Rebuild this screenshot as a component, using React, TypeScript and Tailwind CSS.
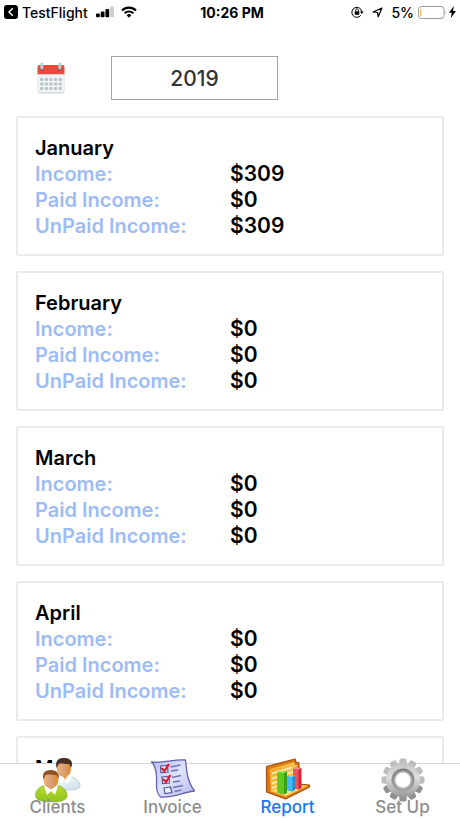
import React from "react";

type Month = { name: string; income: number; paid: number; unpaid: number };

const months: Month[] = [
  { name: "January", income: 309, paid: 0, unpaid: 309 },
  { name: "February", income: 0, paid: 0, unpaid: 0 },
  { name: "March", income: 0, paid: 0, unpaid: 0 },
  { name: "April", income: 0, paid: 0, unpaid: 0 },
  { name: "May", income: 0, paid: 0, unpaid: 0 },
];

function StatusBar() {
  return (
    <header className="grid h-6 shrink-0 grid-cols-[1fr_auto_1fr] items-center pr-1 pl-1 text-[14px] font-medium text-black">
      <div className="flex items-center">
        <svg className="mr-1 h-[14px] w-[14px]" viewBox="0 0 14 14" aria-hidden="true">
          <rect width="14" height="14" rx="3" fill="#000" />
          <path d="M8.8 3.3 5 7l3.8 3.7" fill="none" stroke="#fff" strokeWidth="1.4" />
        </svg>
        <span>TestFlight</span>
        <svg className="ml-2 h-3 w-[19px]" viewBox="0 0 19 12" aria-hidden="true">
          <rect x="0" y="7.5" width="3.8" height="3.7" rx="1" />
          <rect x="4.7" y="5.5" width="3.8" height="5.7" rx="1" />
          <rect x="9.4" y="3" width="3.8" height="8.2" rx="1" />
          <rect x="14.1" y="0.5" width="3.8" height="10.7" rx="1" fill="#cdcdcd" />
        </svg>
        <svg className="ml-1.5 h-3 w-4" viewBox="0 0 16 12" aria-hidden="true">
          <g fill="none" stroke="#000" strokeWidth="2.1">
            <path d="M1 4.5a10 10 0 0 1 14 0" />
            <path d="M3.6 7.3a6.3 6.3 0 0 1 8.8 0" />
          </g>
          <path d="M5.6 9.2a3.5 3.5 0 0 1 4.8 0L8 11.7Z" />
        </svg>
      </div>
      <span className="pl-1 font-bold">10:26 PM</span>
      <div className="flex items-center justify-end">
        <svg className="mr-2 h-3 w-[13px]" viewBox="0 0 13 12" aria-hidden="true">
          <path d="M9.8 9.4A5 5 0 1 1 10.8 5.6" fill="none" stroke="#000" strokeWidth="1" />
          <path d="M8.9 5.4h3.8l-1.9 2.5Z" />
          <rect x="3.7" y="5.2" width="4.6" height="3.6" rx=".5" />
          <path d="M4.6 5.3V4.2a1.4 1.4 0 0 1 2.8 0v1.1" fill="none" stroke="#000" strokeWidth=".9" />
        </svg>
        <svg className="mr-2 h-[11px] w-[11px]" viewBox="0 0 11 11" aria-hidden="true">
          <path d="M10 1 6.2 9.8 5.6 5.5 1 5Z" fill="none" stroke="#000" strokeWidth="1.2" strokeLinejoin="round" />
        </svg>
        <span>5%</span>
        <svg className="ml-1 h-[13px] w-[29px]" viewBox="0 0 29 13" aria-hidden="true">
          <rect x=".5" y=".5" width="25.5" height="12" rx="3" fill="none" stroke="#999" />
          <path d="M2.8 3v7" stroke="#f6c65b" strokeWidth="1.5" />
          <path d="M27.3 4.7q1.2 1.8 0 3.6Z" fill="#777" />
        </svg>
        <svg className="ml-0.5 h-3 w-[7px]" viewBox="0 0 7 12" aria-hidden="true">
          <path d="M4.8 0 0 6.7h2.7L1.8 12 7 4.9H4.1Z" />
        </svg>
      </div>
    </header>
  );
}

function CalendarIcon() {
  return (
    <svg className="h-8 w-7" viewBox="0 0 28 32" aria-hidden="true">
      <rect x=".5" y="13" width="27" height="18.6" rx="2" fill="#cfd6da" />
      <path d="M.5 11h27v17.3a2 2 0 0 1-2 2h-23a2 2 0 0 1-2-2Z" fill="#f1f4f5" />
      <path d="M.5 5a2 2 0 0 1 2-2h23a2 2 0 0 1 2 2v7.3H.5Z" fill="#e64c3c" />
      <g fill="#8e4a43">
        <circle cx="4.8" cy="6.8" r="2" />
        <circle cx="22.8" cy="6.8" r="2" />
      </g>
      <rect x="3.3" y=".5" width="3" height="7" rx="1.5" fill="#c5cbce" />
      <rect x="21.3" y=".5" width="3" height="7" rx="1.5" fill="#c5cbce" />
      {[16, 20.5, 25].map((y) =>
        [3.2, 7.8, 12.4, 17, 21.6].map((x) => (
          <rect key={`${x}-${y}`} x={x} y={y} width="3.2" height="3" rx=".7" fill="#bac3c9" />
        )),
      )}
    </svg>
  );
}

function ClientsIcon() {
  return (
    <svg className="h-[46px] w-[46px]" viewBox="0 0 46 46" aria-hidden="true">
      <defs>
        <linearGradient id="skin" x1="0" x2="1">
          <stop offset="0" stopColor="#e8b27a" />
          <stop offset=".5" stopColor="#d9a078" />
          <stop offset="1" stopColor="#d98c1f" />
        </linearGradient>
        <linearGradient id="greenShirt" x1="0" y1="0" x2="0" y2="1">
          <stop offset="0" stopColor="#b5da32" />
          <stop offset="1" stopColor="#8fc41c" />
        </linearGradient>
        <linearGradient id="whiteShirt" x1="0" y1="0" x2="1" y2="1">
          <stop offset="0" stopColor="#ffffff" />
          <stop offset="1" stopColor="#c9dde6" />
        </linearGradient>
      </defs>
      <path d="M19 31c-1-7 3-11 9-12h5c7 1 12 5 12 10 0 3-6 4-13 4-6 0-11 0-13-2Z" fill="url(#whiteShirt)" stroke="#a5bcc8" strokeWidth=".6" />
      <path d="m24 18 5 7 6-7v-3H24Z" fill="#e3a65d" />
      <path d="m22 19 5-1 3 5 4-6 3 3-5 7-3-3-3 3Z" fill="#fff" />
      <ellipse cx="29" cy="11" rx="6.8" ry="8.5" fill="url(#skin)" stroke="#d58b22" strokeWidth=".6" />
      <path d="M21.5 11C20 4 23 1 29 1s10 3 7 10c-1-2-1-4-3-4-5 0-7-1-9 0-1.500 1-1 2-2.500 4Z" fill="#4b3026" />
      <path d="M.7 39C0 33 5 29 12 28h8c8 1 13 6 12 12-1 3-7 5-16 5S1 43 .7 39Z" fill="url(#greenShirt)" stroke="#72a60d" strokeWidth=".6" />
      <path d="m10 27 6 7 6-7v-3H10Z" fill="#e4a65f" />
      <path d="m9 29 3-2 4 6 4-6 3 2-3 9-4-4-4 4Z" fill="#fff" />
      <ellipse cx="16" cy="22.5" rx="7" ry="8.6" fill="url(#skin)" stroke="#d58b22" strokeWidth=".6" />
      <path d="M8.3 22C7 16 10 13 16 13s9 4 7.500 9c-1-2-1-3-2.500-4-5 0-8-1-10 0-1.500 1-1 2-2.700 4Z" fill="#91501f" />
    </svg>
  );
}

function InvoiceIcon() {
  return (
    <svg className="h-[46px] w-[46px]" viewBox="0 0 46 46" aria-hidden="true">
      <defs>
        <linearGradient id="paper" x1="0" y1="0" x2="1" y2="1">
          <stop offset="0" stopColor="#b7bdf0" />
          <stop offset=".5" stopColor="#e1e2ff" />
          <stop offset="1" stopColor="#b4b7ee" />
        </linearGradient>
      </defs>
      <path d="M1.5 5c10 2 22-3 34-2 1 11 2 22 9 31-11 1-21 7-34 6C4 34 8 25 6 15 5 10 4 7 1.5 5Z" fill="url(#paper)" stroke="#6264a9" strokeWidth="1.3" strokeLinejoin="round" />
      <g fill="#eef" stroke="#56578e" strokeWidth="1.2">
        <path d="m10.500 9 7-.5.5 6.500-7 .5Z" />
        <path d="m12 20 7-.5.5 6.500-7 .5Z" />
        <path d="m14 31 6.500-1 1.500 5.500-7 1Z" />
      </g>
      <g fill="none" stroke="#e2192c" strokeWidth="2.3">
        <path d="m11.500 11 3 3 4.500-7" />
        <path d="m13 22 3 3 4.500-7" />
      </g>
      <path d="m20.500 10 10-2M21 14l7-1M22 20.500l9-2M23 25l7-1M23 30.500l10-2M24.500 34.500l7-1.500" fill="none" stroke="#7175b5" strokeWidth="1.5" />
    </svg>
  );
}

function ReportIcon() {
  return (
    <svg className="h-[46px] w-[46px]" viewBox="0 0 46 46" aria-hidden="true">
      <defs>
        <linearGradient id="board" x1="0" y1="0" x2="1" y2="1">
          <stop offset="0" stopColor="#f2a01c" />
          <stop offset="1" stopColor="#ffe07a" />
        </linearGradient>
      </defs>
      <path d="M1.500 9.500 30 2l1 3 3 1v21l10.500 1v2L20.500 42 1.500 35Z" fill="#d87912" stroke="#a9500f" strokeWidth="1.2" strokeLinejoin="round" />
      <path d="m4.500 12 24.500-7 1 3h2.500v19L6 33Z" fill="url(#board)" />
      <path d="m7 16.500 20-6M7 21.500l24-7.500M7 26.500l24-7.500M7 31l24-7" fill="none" stroke="#fff4b8" strokeWidth="1.6" />
      <path d="m5 33.500 17-6 20 1.500-21.500 10.500Z" fill="#ffe07a" stroke="#f4b232" strokeWidth="1" />
      <path d="m28 12 2.500-1.500 6 .5v20l-2.500 1.500-6-1.500Z" fill="#c92738" />
      <path d="m28 12 5.500.5v20l-5.500-1.500Z" fill="#f0535e" />
      <path d="m28 12 2.500-1.500 6 .5-3 1.500Z" fill="#ff9294" />
      <path d="m12.500 15.500 2.500-1.500 7 .5V36l-3 1.500-6.500-2Z" fill="#3c9f17" />
      <path d="m12.500 15.500 6.500.5v21.500l-6.500-2Z" fill="#60c71c" />
      <path d="m12.500 15.500 2.500-1.500 7 .5-3 1.500Z" fill="#a0ea55" />
      <path d="m22 19.500 2-1.500 6 .5V33l-2.500 1.500-5.500-1.500Z" fill="#218ed0" />
      <path d="m22 19.500 5.500.5v14.500L22 33Z" fill="#3ebcf5" />
      <path d="m22 19.500 2-1.500 6 .5-2.500 1.500Z" fill="#8bddfd" />
    </svg>
  );
}

function SetUpIcon() {
  const teeth = Array.from({ length: 12 }, (_, i) => i * 30);
  return (
    <svg className="h-[46px] w-[46px]" viewBox="0 0 46 46" aria-hidden="true">
      <defs>
        <linearGradient id="gearFace" x1="0" y1="0" x2="0" y2="46" gradientUnits="userSpaceOnUse">
          <stop offset="0" stopColor="#b8b8b8" />
          <stop offset=".45" stopColor="#dedede" />
          <stop offset="1" stopColor="#858585" />
        </linearGradient>
        <linearGradient id="gearRing" x1="0" y1="0" x2="0" y2="1">
          <stop offset="0" stopColor="#808080" />
          <stop offset="1" stopColor="#a5a5a5" />
        </linearGradient>
      </defs>
      {teeth.map((angle) => (
        <path
          key={angle}
          d="M19 9 19.500 3q.3-1.500 1.700-1.500h3.600q1.400 0 1.700 1.500L27 9Z"
          fill={angle > 100 && angle < 260 ? "#929292" : "#bdbdbd"}
          transform={`rotate(${angle} 23 23)`}
        />
      ))}
      <circle cx="23" cy="23" r="17" fill="url(#gearFace)" />
      <circle cx="23" cy="23" r="11.500" fill="url(#gearRing)" />
      <circle cx="23" cy="23" r="9" fill="#b9b9b9" />
      <circle cx="23" cy="23" r="7.500" fill="#fff" />
    </svg>
  );
}

function MonthCard({ month }: { month: Month }) {
  const rows: [string, number][] = [
    ["Income:", month.income],
    ["Paid Income:", month.paid],
    ["UnPaid Income:", month.unpaid],
  ];
  return (
    <section className="shrink-0 rounded-xs border-2 border-[#e8eaeb] px-[17px] pt-[17px] pb-[15px] text-[20px] leading-[26px] font-semibold text-black">
      <h2>{month.name}</h2>
      <dl>
        {rows.map(([label, value]) => (
          <div key={label} className="grid grid-cols-2">
            <dt className="text-[#9dbcf5]">{label}</dt>
            <dd className="text-[21px]">${value}</dd>
          </div>
        ))}
      </dl>
    </section>
  );
}

const tabs = [
  { label: "Clients", Icon: ClientsIcon, active: false },
  { label: "Invoice", Icon: InvoiceIcon, active: false },
  { label: "Report", Icon: ReportIcon, active: true },
  { label: "Set Up", Icon: SetUpIcon, active: false },
];

export default function App() {
  return (
    <div className="flex h-screen flex-col bg-white font-['Inter','Liberation_Sans',sans-serif]">
      <StatusBar />
      <main className="flex min-h-0 flex-1 flex-col overflow-hidden px-4 pt-8">
        <div className="flex shrink-0 items-center pl-[21px]">
          <CalendarIcon />
          <button
            type="button"
            aria-label="Year 2019"
            className="ml-[46px] h-11 w-[167px] border border-[#a5a5a5] pt-0.5 text-[21px] font-medium text-[#333]"
          >
            2019
          </button>
        </div>
        <div className="mt-4 flex min-h-0 flex-1 flex-col gap-[15px] overflow-hidden">
          {months.map((month) => (
            <MonthCard key={month.name} month={month} />
          ))}
        </div>
      </main>
      <nav className="relative grid h-[55px] shrink-0 grid-cols-4 border-t border-[#d5d5d5] bg-white">
        {tabs.map(({ label, Icon, active }) => (
          <button
            key={label}
            type="button"
            aria-current={active ? "page" : undefined}
            className={`-mt-[7px] flex flex-col items-center text-[17px] leading-5 font-medium ${
              active ? "text-[#1677ff]" : "text-[#8e8e8e]"
            }`}
          >
            <Icon />
            <span className="-mt-1.5">{label}</span>
          </button>
        ))}
      </nav>
    </div>
  );
}
